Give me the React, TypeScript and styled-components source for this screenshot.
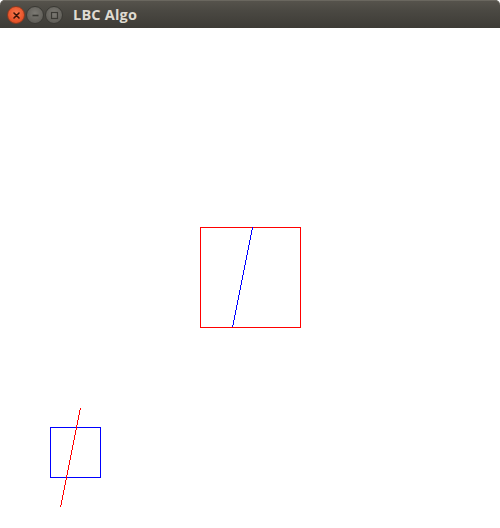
import React from "react";
import styled, { createGlobalStyle } from "styled-components";

const Global = createGlobalStyle`
  html, body { margin: 0; padding: 0; background: #ffffff; }
  body { width: 500px; height: 528px; overflow: hidden; }
`;

const Window = styled.div`
  width: 500px;
  height: 528px;
  display: flex;
  flex-direction: column;
  background: #ffffff;
`;

const TitleBar = styled.div`
  height: 28px;
  flex: none;
  display: flex;
  align-items: center;
  padding-left: 7px;
  padding-top: 2px;
  box-sizing: border-box;
  background: linear-gradient(#57544d 0%, #4a4842 40%, #3d3b36 100%);
  border-top-left-radius: 5px;
  border-top-right-radius: 5px;
  box-shadow: inset 0 1px 0 #6a675f;
`;

const Controls = styled.div`
  display: flex;
  align-items: center;
  gap: 1px;
`;

const CircleButton = styled.div<{ $close?: boolean }>`
  width: 18px;
  height: 18px;
  border-radius: 50%;
  display: flex;
  align-items: center;
  justify-content: center;
  box-sizing: border-box;
  border: 1px solid ${(p) => (p.$close ? "#8a3a20" : "#3a3934")};
  background: ${(p) =>
    p.$close
      ? "radial-gradient(circle at 50% 40%, #f77a4f 0%, #e9552b 60%, #c8431e 100%)"
      : "radial-gradient(circle at 50% 40%, #7c7a74 0%, #65635d 60%, #55534e 100%)"};
`;

const Title = styled.span`
  margin-left: 10px;
  font-family: "Open Sans", "DejaVu Sans", sans-serif;
  font-weight: 700;
  font-size: 14.5px;
  color: #dfdbd2;
  letter-spacing: 0.2px;
  margin-top: -2px;
`;

const Canvas = styled.svg`
  display: block;
  flex: 1;
  width: 500px;
  height: 500px;
`;

export default function App() {
  return (
    <Window>
      <Global />
      <TitleBar>
        <Controls>
          <CircleButton $close>
            <svg width="9" height="9" viewBox="0 0 9 9">
              <path d="M2 2 L7 7 M7 2 L2 7" stroke="#3b1407" strokeWidth="1.6" strokeLinecap="round" />
            </svg>
          </CircleButton>
          <CircleButton>
            <svg width="9" height="9" viewBox="0 0 9 9">
              <path d="M1.5 4.5 H7.5" stroke="#3a3934" strokeWidth="1.6" />
            </svg>
          </CircleButton>
          <CircleButton>
            <svg width="9" height="9" viewBox="0 0 9 9">
              <rect x="1.5" y="1.5" width="6" height="6" fill="none" stroke="#3a3934" strokeWidth="1.2" />
            </svg>
          </CircleButton>
        </Controls>
        <Title>LBC Algo</Title>
      </TitleBar>
      <Canvas viewBox="0 28 500 500" shapeRendering="crispEdges">
        <rect x="200.5" y="227.5" width="100" height="100" fill="none" stroke="#ff0000" strokeWidth="1" />
        <line x1="252.5" y1="227.5" x2="232.5" y2="327.5" stroke="#0000ff" strokeWidth="1" />
        <rect x="50.5" y="427.5" width="50" height="50" fill="none" stroke="#0000ff" strokeWidth="1" />
        <line x1="80.5" y1="408" x2="60.5" y2="507.5" stroke="#ff0000" strokeWidth="1" />
      </Canvas>
    </Window>
  );
}
